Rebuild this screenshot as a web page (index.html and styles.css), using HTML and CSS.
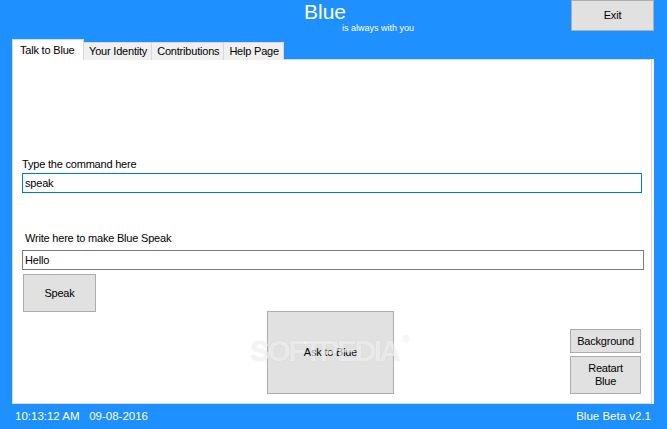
FILE: index.html
```html
<!DOCTYPE html>
<html lang="en">
<head>
    <meta charset="UTF-8">
    <title>Blue</title>
    <link rel="stylesheet" href="styles.css">
</head>
<body>

    <div class="window">
        <!-- Header: title + exit -->
        <div class="header">
            <div class="title">
                <div class="title-main">Blue</div>
                <div class="title-sub">is always with you</div>
            </div>
            <button class="btn exit-btn">Exit</button>
        </div>

        <!-- Tabs -->
        <div class="tabs">
            <div class="tab active">Talk to Blue</div>
            <div class="tab">Your Identity</div>
            <div class="tab">Contributions</div>
            <div class="tab">Help Page</div>
        </div>

        <div class="panel">
            <div class="label label-cmd">Type the command here</div>
            <input class="field field-cmd" type="text" value="speak">

            <div class="label label-speak">Write here to make Blue Speak</div>
            <input class="field field-speak" type="text" value="Hello">

            <button class="btn speak-btn">Speak</button>

            <div class="bottom-row">
                <button class="btn ask-btn">Ask to Blue</button>
                <div class="side-btns">
                    <button class="btn small-btn">Background</button>
                    <button class="btn small-btn tall">Reatart<br>Blue</button>
                </div>
            </div>
        </div>

        <!-- Status bar -->
        <div class="status">
            <span>10:13:12 AM&nbsp;&nbsp;&nbsp;09-08-2016</span>
            <span>Blue Beta v2.1</span>
        </div>

        <div class="watermark">SOFTPEDIA<span class="reg">®</span></div>
    </div>

</body>
</html>
```

FILE: styles.css
```css
body {
    margin: 0;
    padding: 0;
    background-color: #1e90ff;
    font-family: "Liberation Sans", Arial, sans-serif;
    font-size: 11px;
    letter-spacing: -0.2px;
    color: #000;
}
.window {
    position: relative;
    width: 667px;
    height: 429px;
    overflow: hidden;
}
.header {
    display: flex;
    height: 39px;
}
.title {
    margin-left: 304px;
    color: #fff;
}
.title-main {
    font-size: 21px;
    line-height: 23px;
    letter-spacing: 0;
}
.title-sub {
    font-size: 9px;
    line-height: 10px;
    margin-left: 38px;
    letter-spacing: 0;
}
.btn {
    background-color: #e1e1e1;
    border: 1px solid #adadad;
    font-family: "Liberation Sans", Arial, sans-serif;
    font-size: 11px;
    letter-spacing: -0.2px;
    color: #000;
    padding: 0;
    margin: 0;
    line-height: 13px;
}
.exit-btn {
    width: 83px;
    height: 31px;
    margin-left: auto;
    margin-right: 13px;
}
.tabs {
    display: flex;
    align-items: flex-end;
    margin-left: 12px;
    height: 21px;
    margin-bottom: -1px;
    position: relative;
    z-index: 1;
}
.tab {
    height: 18px;
    line-height: 17px;
    padding: 0 4px 0 5px;
    white-space: nowrap;
    background-color: #f0f0f0;
    border: 1px solid #d9d9d9;
    border-bottom: none;
    box-sizing: border-box;
    margin-left: -1px;
}
.tab.active {
    width: 72px;
    height: 21px;
    line-height: 20px;
    padding: 0 0 0 7px;
    background-color: #fff;
    margin-left: 0;
}
.panel {
    margin-left: 12px;
    width: 640px;
    height: 345px;
    box-sizing: border-box;
    background-color: #fff;
    border: 1px solid #d9d9d9;
    box-shadow: 2px 0 0 #fff;
    padding: 97px 10px 0 9px;
}
.label {
    line-height: 14px;
}
.label-speak {
    margin-top: 38px;
    margin-left: 3px;
}
.field {
    display: block;
    box-sizing: border-box;
    height: 20px;
    margin: 2px 0 0 0;
    padding: 0 2px;
    font-family: "Liberation Sans", Arial, sans-serif;
    font-size: 11px;
    letter-spacing: -0.2px;
    color: #000;
    outline: none;
}
.field-cmd {
    width: 620px;
    border: 1px solid #0078d7;
}
.field-speak {
    width: 622px;
    margin-top: 5px;
    border: 1px solid #7a7a7a;
}
.speak-btn {
    display: block;
    width: 73px;
    height: 38px;
    margin: 4px 0 0 1px;
}
.bottom-row {
    display: flex;
    align-items: flex-end;
    margin-top: -1px;
}
.ask-btn {
    width: 127px;
    height: 83px;
    margin-left: 245px;
}
.side-btns {
    margin-left: auto;
    display: flex;
    flex-direction: column;
    gap: 3px;
}
.small-btn {
    width: 71px;
    height: 24px;
}
.small-btn.tall {
    height: 38px;
}
.status {
    display: flex;
    justify-content: space-between;
    color: #fff;
    font-size: 11.5px;
    letter-spacing: 0;
    line-height: 25px;
    padding: 0 16px 0 15px;
}
.watermark {
    position: absolute;
    left: 250px;
    top: 334px;
    font-size: 30px;
    font-weight: bold;
    letter-spacing: -2.6px;
    color: rgba(255, 255, 255, 0.65);
    text-shadow: 0 0 1px rgba(0, 0, 0, 0.12);
    pointer-events: none;
}
.watermark .reg {
    font-size: 10px;
    font-weight: normal;
    letter-spacing: 0;
    margin-left: 4px;
    vertical-align: top;
}
```
